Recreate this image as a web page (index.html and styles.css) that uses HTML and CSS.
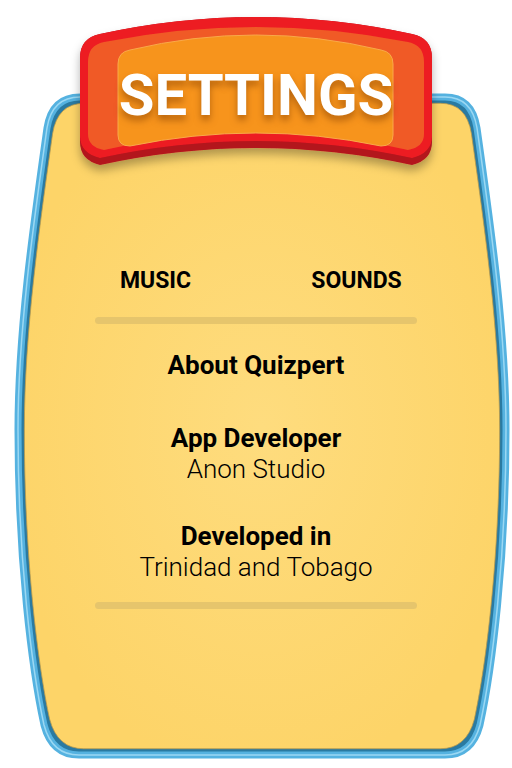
FILE: index.html
```html
<!DOCTYPE html>
<html lang="en">
<head>
  <meta charset="UTF-8" />
  <meta name="viewport" content="width=device-width, initial-scale=1.0" />
  <title>Settings</title>
  <link rel="stylesheet" href="styles.css">
</head>
<body>
  <div class="screen">
    <!-- card frame and banner artwork -->
    <svg class="art" viewBox="0 0 512 768" width="512" height="768">
      <defs>
        <path id="cardShape" d="M 80 97 L 445 97 Q 472 97 477 128 C 490 220, 506 330, 506 430 C 506 560, 492 670, 480 725 Q 472 755 445 755 L 79 755 Q 52 755 44 725 C 32 670, 18 560, 18 430 C 18 330, 34 220, 47 128 Q 52 97 80 97 Z" />
        <radialGradient id="cardFill" cx="50%" cy="50%" r="55%">
          <stop offset="0%" stop-color="#fedc7e" />
          <stop offset="100%" stop-color="#fdd468" />
        </radialGradient>
        <filter id="bannerShadow" x="-10%" y="-10%" width="120%" height="140%">
          <feDropShadow dx="0" dy="6" stdDeviation="5" flood-color="#000" flood-opacity="0.3" />
        </filter>
      </defs>

      <g class="card">
        <use href="#cardShape" fill="#2a7aa1" stroke="#55b2e0" stroke-width="7" />
        <use href="#cardShape" fill="none" stroke="#9bd8f3" stroke-width="1.5" />
        <use href="#cardShape" transform="translate(262 426) scale(0.974 0.981) translate(-262 -426)"
             fill="url(#cardFill)" stroke="#b89a4c" stroke-width="0.8" />
      </g>

      <g class="banner-art" filter="url(#bannerShadow)">
        <path d="M 80 58 Q 80 38 100 34 Q 256 0 412 34 Q 432 38 432 58 L 432 142 Q 432 160 412 165 Q 256 131 100 165 Q 80 160 80 142 Z" fill="#b3141d" />
        <path d="M 80 58 Q 80 38 100 34 Q 256 0 412 34 Q 432 38 432 58 L 432 136 Q 432 153 412 158 Q 256 124 100 158 Q 80 153 80 136 Z" fill="#ed1c24" />
        <path d="M 88 62 Q 88 45 104 42 Q 256 12 408 42 Q 424 45 424 62 L 424 134 Q 424 147 408 150 Q 256 116 104 150 Q 88 147 88 134 Z" fill="#f05a28" />
        <path d="M 118 64 Q 118 52 130 50 Q 256 20 381 50 Q 393 52 393 64 L 393 135 Q 393 146 381 146 Q 256 120 130 146 Q 118 146 118 135 Z" fill="#f7941d" stroke="#f9a948" stroke-width="1" />
      </g>
    </svg>

    <header class="banner">
      <h1 class="banner-title">SETTINGS</h1>
    </header>

    <main class="panel">
      <div class="toggles">
        <span class="toggle-label">MUSIC</span>
        <span class="toggle-label">SOUNDS</span>
      </div>

      <div class="divider"></div>

      <section class="info">
        <p class="info-title about">About Quizpert</p>

        <div class="info-group">
          <p class="info-title">App Developer</p>
          <p class="info-value">Anon Studio</p>
        </div>

        <div class="info-group last">
          <p class="info-title">Developed in</p>
          <p class="info-value">Trinidad and Tobago</p>
        </div>
      </section>

      <div class="divider bottom"></div>
    </main>
  </div>
</body>
</html>
```

FILE: styles.css
```css
body {
  margin: 0;
  background: #fff;
  font-family: Roboto, "Liberation Sans", sans-serif;
  color: #000;
}
.screen {
  position: relative;
  width: 512px;
  height: 768px;
  overflow: hidden;
}
.art {
  position: absolute;
  top: 0;
  left: 0;
}
.banner {
  position: relative;
  padding-top: 62px;
  text-align: center;
}
.banner-title {
  margin: 0;
  font-size: 58px;
  line-height: 66px;
  font-weight: 700;
  color: #fff;
  text-shadow: 0 5px 7px rgba(130, 60, 0, 0.55);
}
.panel {
  position: relative;
  margin-top: 140px;
}
.toggles {
  display: grid;
  grid-template-columns: 1fr 1fr;
  width: 402px;
  margin: 0 auto;
}
.toggle-label {
  text-align: center;
  font-size: 23px;
  line-height: 26px;
  font-weight: 700;
}
.divider {
  width: 322px;
  height: 7px;
  margin: 23px auto 0;
  border-radius: 4px;
  background: #e6c56c;
}
.divider.bottom {
  margin-top: 19px;
}
.info {
  margin-top: 26px;
  text-align: center;
}
.info p {
  margin: 0;
  font-size: 26px;
  line-height: 31px;
}
.info-title {
  font-weight: 700;
}
.info-value {
  font-weight: 300;
}
.info-group {
  margin-top: 42px;
}
.info-group.last {
  margin-top: 36px;
}
```
